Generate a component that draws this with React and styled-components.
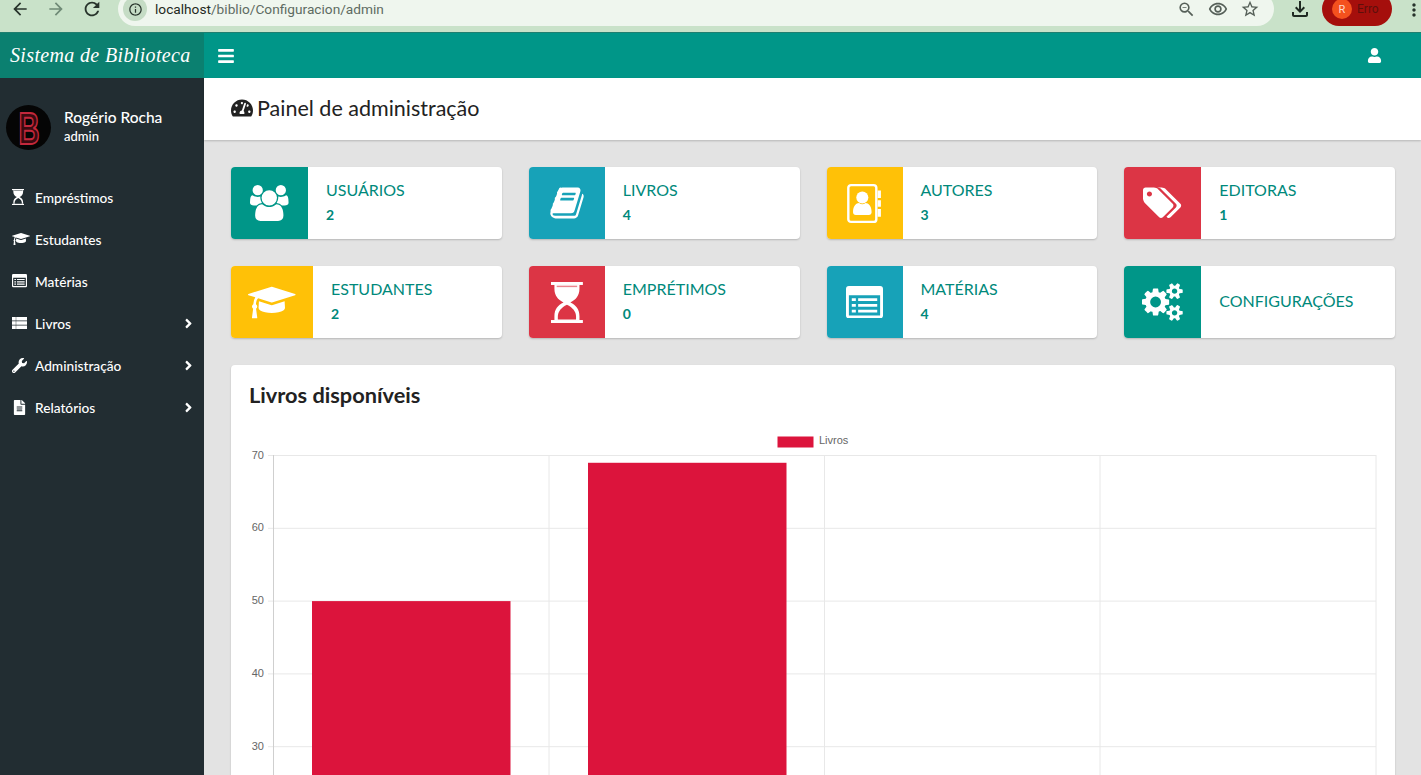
import React from 'react'
import styled, { createGlobalStyle } from 'styled-components'
import {
  MdArrowBack, MdArrowForward, MdRefresh, MdInfoOutline, MdZoomOut, MdOutlineRemoveRedEye,
  MdStarBorder, MdOutlineFileDownload, MdMoreVert,
} from 'react-icons/md'
import { FaBars, FaUser, FaTachometerAlt, FaWrench, FaFileAlt, FaAngleRight } from 'react-icons/fa'

const GlobalStyle = createGlobalStyle`
html, body { margin: 0; padding: 0; }
body { font-family: "Lato", "Liberation Sans", sans-serif; background: #e3e3e3; }
`

const Page = styled.div`
display: flex;
flex-direction: column;
height: 775px;
overflow: hidden;
`

/* browser chrome */
const Toolbar = styled.div`
display: flex;
align-items: flex-start;
height: 32px;
flex: none;
background: #c9e2c9;
border-bottom: 1px solid #1f7f70;
overflow: hidden;
`
const NavButtons = styled.div`
display: flex;
width: 118px;
flex: none;
padding-left: 8px;
box-sizing: border-box;
gap: 12px;
`
const ChromeBtn = styled.span`
display: flex;
align-items: center;
justify-content: center;
width: 24px;
height: 18px;
font-size: ${p => p.$size || 20}px;
color: ${p => p.$dim ? '#6f8a76' : p.$soft ? '#555f58' : '#27332b'};
`
const UrlPill = styled.div`
display: flex;
align-items: center;
width: 1156px;
height: 34px;
margin-top: -8px;
flex: none;
border-radius: 17px;
background: #eff6ee;
padding: 0 12px 0 5px;
box-sizing: border-box;
`
const InfoChip = styled.span`
display: flex;
align-items: center;
justify-content: center;
width: 24px;
height: 24px;
border-radius: 50%;
background: #c5dcc5;
color: #27332b;
font-size: 15px;
`
const Url = styled.div`
flex: 1;
margin-left: 8px;
font-family: "Roboto", "Liberation Sans", sans-serif;
font-size: 13.7px;
color: #5e6b62;
b { font-weight: 400; color: #1f2a22; }
`
const PillIcons = styled.div`
display: flex;
gap: 8px;
`
const Download = styled.span`
display: flex;
margin: -3px 0 0 14px;
font-size: 24px;
color: #1f2a22;
`
const Profile = styled.div`
display: flex;
align-items: center;
width: 70px;
height: 34px;
margin: -8px 0 0 10px;
padding-left: 10px;
box-sizing: border-box;
flex: none;
border-radius: 17px;
background: #a50f0c;
color: #5d0f0c;
font-family: "Roboto", sans-serif;
font-size: 12px;
`
const ProfileBadge = styled.span`
display: flex;
align-items: center;
justify-content: center;
width: 20px;
height: 20px;
margin-right: 5px;
border-radius: 50%;
background: #f4511e;
color: #ffd9cc;
font-size: 11px;
`
const Kebab = styled.span`
display: flex;
margin-left: 12px;
font-size: 20px;
color: #27332b;
`

/* app header */
const Header = styled.header`
display: flex;
height: 45px;
flex: none;
background: #009688;
color: #fff;
`
const Logo = styled.div`
display: flex;
align-items: center;
width: 204px;
padding-left: 10px;
box-sizing: border-box;
flex: none;
background: #0b8070;
font-family: "Liberation Serif", serif;
font-style: italic;
font-size: 20px;
letter-spacing: .35px;
`
const HeaderBar = styled.div`
display: flex;
flex: 1;
align-items: center;
justify-content: space-between;
padding: 0 39px 0 13px;
font-size: 18px;
`

const Body = styled.div`
display: flex;
flex: 1;
min-height: 0;
`

/* sidebar */
const Sidebar = styled.aside`
width: 204px;
flex: none;
background: #222d32;
color: #fff;
`
const UserPanel = styled.div`
display: flex;
align-items: center;
gap: 13px;
padding-left: 6px;
height: 99px;
`
const Avatar = styled.svg`
width: 45px;
height: 45px;
flex: none;
overflow: visible;
`
const UserText = styled.div`
margin-top: -2px;
`
const UserName = styled.div`
font-size: 15.5px;
font-weight: 500;
line-height: 19px;
`
const UserRole = styled.div`
font-size: 13px;
font-weight: 500;
line-height: 19px;
`
const Menu = styled.nav`
display: flex;
flex-direction: column;
`
const MenuItem = styled.div`
display: flex;
align-items: center;
height: 42px;
box-sizing: border-box;
padding: 0 8px 2px 12px;
font-size: 13.7px;
font-weight: 500;
`
const MenuIcon = styled.span`
display: flex;
align-items: center;
flex: none;
width: 23px;
font-size: 15px;
`
const MenuLabel = styled.span`
flex: 1;
`
const MenuArrow = styled.span`
display: flex;
font-size: 15px;
`

/* main area */
const Main = styled.main`
flex: 1;
min-width: 0;
background: #e3e3e3;
`
const TitleBar = styled.div`
display: flex;
align-items: center;
gap: 4px;
height: 60px;
padding: 0 0 2px 27px;
background: #fff;
box-shadow: 0 1px 2px rgba(0, 0, 0, .2);
`
const PageTitle = styled.h1`
margin: 0;
font-size: 21.5px;
font-weight: 400;
color: #222;
`
const Content = styled.div`
display: flex;
flex-direction: column;
gap: 27px;
padding: 27px 26px 0 27px;
`
const TileGrid = styled.div`
display: grid;
grid-template-columns: repeat(4, 1fr);
gap: 27px;
`
const Tile = styled.div`
display: flex;
height: 72px;
border-radius: 4px;
overflow: hidden;
background: #fff;
box-shadow: 0 1px 2px rgba(0, 0, 0, .2);
`
const TileIcon = styled.div`
display: flex;
align-items: center;
justify-content: center;
flex: none;
width: ${p => p.$width}px;
background: ${p => p.$color};
color: #fff;
`
const TileText = styled.div`
display: flex;
flex-direction: column;
justify-content: center;
padding: 0 0 2px 18px;
color: #00897b;
`
const TileTitle = styled.div`
font-size: 16px;
line-height: 20px;
`
const TileValue = styled.div`
margin-top: 5px;
font-size: 14px;
font-weight: 700;
line-height: 20px;
`
const Card = styled.section`
padding: 17px 18px 0;
height: 480px;
border-radius: 4px;
background: #fff;
box-shadow: 0 1px 2px rgba(0, 0, 0, .2);
`
const CardTitle = styled.h3`
margin: 0 0 20px;
font-size: 21.75px;
font-weight: 700;
line-height: 26px;
color: #222;
`
const ChartSvg = styled.svg`
display: block;
`

const Fa = ({ w, h = 36, d }) => (
  <svg width={(w / 1792) * h} height={h} viewBox={`0 0 ${w} 1792`} fill="currentColor"><path d={d} /></svg>
)

const USERS = 'M593 896q-162 5-265 128h-134q-82 0-138-40.5t-56-118.5q0-353 124-353 6 0 43.5 21t97.5 42.5 119 21.5q67 0 133-23-5 37-5 66 0 139 81 256zm1071 637q0 120-73 189.5t-194 69.5h-874q-121 0-194-69.5t-73-189.5q0-53 3.5-103.5t14-109 26.5-108.5 43-97.5 62-81 85.5-53.5 111.5-20q10 0 43 21.5t73 48 107 48 135 21.5 135-21.5 107-48 73-48 43-21.5q61 0 111.5 20t85.5 53.5 62 81 43 97.5 26.5 108.5 14 109 3.5 103.5zm-1024-1277q0 106-75 181t-181 75-181-75-75-181 75-181 181-75 181 75 75 181zm704 384q0 159-112.5 271.5t-271.5 112.5-271.5-112.5-112.5-271.5 112.5-271.5 271.5-112.5 271.5 112.5 112.5 271.5zm576 225q0 78-56 118.5t-138 40.5h-134q-103-123-265-128 81-117 81-256 0-29-5-66 66 23 133 23 59 0 119-21.5t97.5-42.5 43.5-21q124 0 124 353zm-128-609q0 106-75 181t-181 75-181-75-75-181 75-181 181-75 181 75 75 181z'
const BOOK = 'M1703 478q40 57 18 129l-275 906q-19 64-76.5 107.5t-122.5 43.5h-923q-77 0-148.5-53.5t-99.5-131.5q-24-67-2-127 0-4 3-27t4-37q1-8-3-21.5t-3-19.5q2-11 8-21t16.5-23.5 16.5-23.5q23-38 45-91.5t30-91.5q3-10 .5-30t-.5-28q3-11 17-28t17-23q21-36 42-92t25-90q1-9-2.5-32t.5-28q4-13 22-30.5t22-22.5q19-26 42.5-84.5t27.5-96.5q1-8-3-25.5t-2-26.5q2-8 9-18t18-23 17-21q8-12 16.5-30.5t15-35 16-36 19.5-32 26.5-23.5 36-11.5 47.5 5.5l-1 3q38-9 51-9h761q74 0 114 56t18 130l-274 906q-36 119-71.5 153.5t-128.5 34.5h-869q-27 0-38 15-11 16-1 43 24 70 144 70h923q29 0 56-15.5t35-41.5l300-987q7-22 5-57 38 15 59 43zm-1064 2q-4 13 2 22.5t20 9.5h608q13 0 25.5-9.5t16.5-22.5l21-64q4-13-2-22.5t-20-9.5h-608q-13 0-25.5 9.5t-16.5 22.5zm-83 256q-4 13 2 22.5t20 9.5h608q13 0 25.5-9.5t16.5-22.5l21-64q4-13-2-22.5t-20-9.5h-608q-13 0-25.5 9.5t-16.5 22.5z'
const TAGS = 'M448 448q0-53-37.5-90.5t-90.5-37.5-90.5 37.5-37.5 90.5 37.5 90.5 90.5 37.5 90.5-37.5 37.5-90.5zm1067 576q0 53-37 90l-491 492q-39 37-91 37-53 0-90-37l-715-716q-38-37-64.5-101t-26.5-117v-416q0-52 38-90t90-38h416q53 0 117 26.5t102 64.5l715 714q37 39 37 91zm384 0q0 53-37 90l-491 492q-39 37-91 37-36 0-59-14t-53-45l470-470q37-37 37-90 0-52-37-91l-715-714q-38-38-102-64.5t-117-26.5h224q53 0 117 26.5t102 64.5l715 714q37 39 37 91z'
const CAP = 'M1774 836l18 316q4 69-82 128t-235 93.5-323 34.5-323-34.5-235-93.5-82-128l18-316 574 181q22 7 48 7t48-7zm530-324q0 23-22 31l-1120 352q-4 1-10 1t-10-1l-652-206q-43 34-71 111.5t-34 178.5q63 36 63 109 0 69-58 107l58 433q2 14-8 25-9 11-24 11h-192q-15 0-24-11-10-11-8-25l58-433q-58-38-58-107 0-73 65-111 11-207 98-330l-333-104q-22-8-22-31t22-31l1120-352q4-1 10-1t10 1l1120 352q22 8 22 31z'
const COGS = 'M896 896q0-106-75-181t-181-75-181 75-75 181 75 181 181 75 181-75 75-181zm768 512q0-52-38-90t-90-38-90 38-38 90q0 53 37.5 90.5t90.5 37.5 90.5-37.5 37.5-90.5zm0-1024q0-52-38-90t-90-38-90 38-38 90q0 53 37.5 90.5t90.5 37.5 90.5-37.5 37.5-90.5zm-384 421v185q0 10-7 19.5t-16 10.5l-155 24q-11 35-32 76 34 48 90 115 7 11 7 20 0 12-7 19-23 30-82.5 89.5t-78.5 59.5q-11 0-21-7l-115-90q-37 19-77 31-11 108-23 155-7 24-30 24h-186q-11 0-20-7.5t-10-17.5l-23-153q-34-10-75-31l-118 89q-7 7-20 7-11 0-21-8-144-133-144-160 0-9 7-19 10-14 41-53t47-61q-23-44-35-82l-152-24q-10-1-17-9.5t-7-19.5v-185q0-10 7-19.5t16-10.5l155-24q11-35 32-76-34-48-90-115-7-11-7-20 0-12 7-20 22-30 82-89t79-59q11 0 21 7l115 90q34-18 77-32 11-108 23-154 7-24 30-24h186q11 0 20 7.5t10 17.5l23 153q34 10 75 31l118-89q8-7 20-7 11 0 21 8 144 133 144 160 0 8-7 19-12 16-42 54t-45 60q23 48 34 82l152 23q10 2 17 10.5t7 19.5zm640 533v140q0 16-149 31-12 27-30 52 51 113 51 138 0 4-4 7-122 71-124 71-8 0-46-47t-52-68q-20 2-30 2t-30-2q-14 21-52 68t-46 47q-2 0-124-71-4-3-4-7 0-25 51-138-18-25-30-52-149-15-149-31v-140q0-16 149-31 13-29 30-52-51-113-51-138 0-4 4-7 4-2 35-20t59-34 30-16q8 0 46 46.5t52 67.5q20-2 30-2t30 2q51-71 92-112l6-2q4 0 124 70 4 3 4 7 0 25-51 138 17 23 30 52 149 15 149 31zm0-1024v140q0 16-149 31-12 27-30 52 51 113 51 138 0 4-4 7-122 71-124 71-8 0-46-47t-52-68q-20 2-30 2t-30-2q-14 21-52 68t-46 47q-2 0-124-71-4-3-4-7 0-25 51-138-18-25-30-52-149-15-149-31v-140q0-16 149-31 13-29 30-52-51-113-51-138 0-4 4-7 4-2 35-20t59-34 30-16q8 0 46 46.5t52 67.5q20-2 30-2t30 2q51-71 92-112l6-2q4 0 124 70 4 3 4 7 0 25-51 138 17 23 30 52 149 15 149 31z'

const Hourglass = ({ h = 41, cut = '#dc3545' }) => (
  <svg width={(h * 28) / 36} height={h} viewBox="0 0 28 36">
    <rect x="0" y="0" width="28" height="2.6" fill="currentColor" />
    <rect x="0" y="33.400" width="28" height="2.6" fill="currentColor" />
    <path d="M3 2.600h22v3.400c0 6-3 9.500-8 12 5 2.500 8 6 8 12v3.400H3V30c0-6 3-9.500 8-12-5-2.500-8-6-8-12z" fill="currentColor" />
    <path d="M14 20c-5 2.500-8 6-8 10.500v2.500h16v-2.500c0-4.500-3-8-8-10.500z" fill={cut} />
    <rect x="5" y="3.200" width="18" height="1.300" fill={cut} opacity=".6" />
  </svg>
)
const AddressBook = () => (
  <svg width="35" height="41" viewBox="0 0 32 36">
    <rect x="1.200" y="1.200" width="25.600" height="33.600" rx="2.500" fill="none" stroke="currentColor" strokeWidth="2.200" />
    <path d="M28 6h3v7h-3zM28 15h3v6h-3zM28 23h3v7h-3z" fill="currentColor" />
    <circle cx="14" cy="12.500" r="5.500" fill="currentColor" />
    <path d="M5.500 26c0-6 3-8.500 5.500-8.500 1 .8 2 1.200 3 1.200s2-.4 3-1.200c2.500 0 5.500 2.500 5.500 8.500 0 1.500-1 2.500-2.500 2.500H8c-1.500 0-2.500-1-2.500-2.500z" fill="currentColor" />
  </svg>
)
const ListAlt = ({ w = 37, bg = '#17a2b8' }) => (
  <svg width={w} height={(w * 28) / 32} viewBox="0 0 32 28">
    <rect x="0" y="0" width="32" height="28" rx="2.500" fill="currentColor" />
    <rect x="2.500" y="8" width="27" height="17.500" fill={bg} />
    <path d="M5 10.500h3.500v2.500H5zM5 15.500h3.500V18H5zM5 20.500h3.500V23H5zM10.500 10.500H27v2.500H10.500zM10.500 15.500H27V18H10.500zM10.500 20.500H27V23H10.500z" fill="currentColor" />
  </svg>
)
const ListRows = () => (
  <svg width="15" height="12" viewBox="0 0 15 12" fill="currentColor">
    <path d="M0 0h3.800v3.400H0zM4.200 0H15v3.400H4.200zM0 4.300h3.800v3.400H0zM4.200 4.300H15v3.400H4.200zM0 8.600h3.800V12H0zM4.200 8.600H15V12H4.200z" />
  </svg>
)

const menu = [
  { label: 'Empréstimos', icon: <Hourglass h={16} cut="#222d32" /> },
  { label: 'Estudantes', icon: <Fa w={2304} h={14} d={CAP} /> },
  { label: 'Matérias', icon: <ListAlt w={15} bg="#222d32" /> },
  { label: 'Livros', icon: <ListRows />, arrow: true },
  { label: 'Administração', icon: <FaWrench />, arrow: true },
  { label: 'Relatórios', icon: <FaFileAlt />, arrow: true },
]

const tiles = [
  { title: 'USUÁRIOS', value: '2', color: '#009688', width: 77, icon: <Fa w={1920} d={USERS} /> },
  { title: 'LIVROS', value: '4', color: '#17a2b8', width: 76, icon: <Fa w={1792} d={BOOK} /> },
  { title: 'AUTORES', value: '3', color: '#ffc107', width: 76, icon: <AddressBook /> },
  { title: 'EDITORAS', value: '1', color: '#dc3545', width: 77, icon: <Fa w={1920} d={TAGS} /> },
  { title: 'ESTUDANTES', value: '2', color: '#ffc107', width: 82, icon: <Fa w={2304} h={37} d={CAP} /> },
  { title: 'EMPRÉTIMOS', value: '0', color: '#dc3545', width: 76, icon: <Hourglass /> },
  { title: 'MATÉRIAS', value: '4', color: '#17a2b8', width: 76, icon: <ListAlt /> },
  { title: 'CONFIGURAÇÕES', color: '#009688', width: 77, icon: <Fa w={1920} h={38} d={COGS} /> },
]

// chart coordinates are page x minus 249, page y minus 428
const ticks = [70, 60, 50, 40, 30]
const tickY = v => 27.5 + (70 - v) * 7.28
const columns = [24.5, 300, 575.5, 851, 1127]

const Chart = () => (
  <ChartSvg width="1128" height="347" viewBox="0 0 1128 347">
    <rect x="528.500" y="8.500" width="36" height="11" fill="#dc143c" />
    <text x="570" y="16" fontFamily="Liberation Sans" fontSize="11" fill="#666">Livros</text>
    {ticks.map(v => (
      <g key={v}>
        <line x1="19" x2="1127" y1={tickY(v)} y2={tickY(v)} stroke="#e8e8e8" />
        <text x="15" y={tickY(v) + 3} textAnchor="end" fontFamily="Liberation Sans" fontSize="11" fill="#666">{v}</text>
      </g>
    ))}
    {columns.map((x, i) => (
      <line key={x} x1={x} x2={x} y1="27" y2="347" stroke={i === 0 ? '#cfcfcf' : '#e8e8e8'} />
    ))}
    <rect x="63" y={tickY(50)} width="198.500" height="200" fill="#dc143c" />
    <rect x="339" y={tickY(69)} width="198.500" height="340" fill="#dc143c" />
  </ChartSvg>
)

export default function App() {
  return (
    <Page>
      <GlobalStyle />
      <Toolbar>
        <NavButtons>
          <ChromeBtn><MdArrowBack /></ChromeBtn>
          <ChromeBtn $dim><MdArrowForward /></ChromeBtn>
          <ChromeBtn $size={22}><MdRefresh /></ChromeBtn>
        </NavButtons>
        <UrlPill>
          <InfoChip><MdInfoOutline /></InfoChip>
          <Url><b>localhost</b>/biblio/Configuracion/admin</Url>
          <PillIcons>
            <ChromeBtn $soft $size={19}><MdZoomOut /></ChromeBtn>
            <ChromeBtn $soft><MdOutlineRemoveRedEye /></ChromeBtn>
            <ChromeBtn $soft><MdStarBorder /></ChromeBtn>
          </PillIcons>
        </UrlPill>
        <Download><MdOutlineFileDownload /></Download>
        <Profile><ProfileBadge>R</ProfileBadge>Erro</Profile>
        <Kebab><MdMoreVert /></Kebab>
      </Toolbar>
      <Header>
        <Logo>Sistema de Biblioteca</Logo>
        <HeaderBar>
          <FaBars />
          <FaUser size={15} />
        </HeaderBar>
      </Header>
      <Body>
        <Sidebar>
          <UserPanel>
            <Avatar viewBox="0 0 45 45">
              <circle cx="22.500" cy="22.500" r="22.500" fill="#050505" />
              <text x="23" y="39" textAnchor="middle" fontFamily="Liberation Sans" fontWeight="700" fontSize="45" fill="#3a0a10" stroke="#c3283c" strokeWidth="2" textLength="21" lengthAdjust="spacingAndGlyphs">B</text>
            </Avatar>
            <UserText>
              <UserName>Rogério Rocha</UserName>
              <UserRole>admin</UserRole>
            </UserText>
          </UserPanel>
          <Menu>
            {menu.map(m => (
              <MenuItem key={m.label}>
                <MenuIcon>{m.icon}</MenuIcon>
                <MenuLabel>{m.label}</MenuLabel>
                {m.arrow && <MenuArrow><FaAngleRight /></MenuArrow>}
              </MenuItem>
            ))}
          </Menu>
        </Sidebar>
        <Main>
          <TitleBar>
            <FaTachometerAlt size={22} color="#222" />
            <PageTitle>Painel de administração</PageTitle>
          </TitleBar>
          <Content>
            <TileGrid>
              {tiles.map(t => (
                <Tile key={t.title}>
                  <TileIcon $width={t.width} $color={t.color}>{t.icon}</TileIcon>
                  <TileText>
                    <TileTitle>{t.title}</TileTitle>
                    {t.value && <TileValue>{t.value}</TileValue>}
                  </TileText>
                </Tile>
              ))}
            </TileGrid>
            <Card>
              <CardTitle>Livros disponíveis</CardTitle>
              <Chart />
            </Card>
          </Content>
        </Main>
      </Body>
    </Page>
  )
}
